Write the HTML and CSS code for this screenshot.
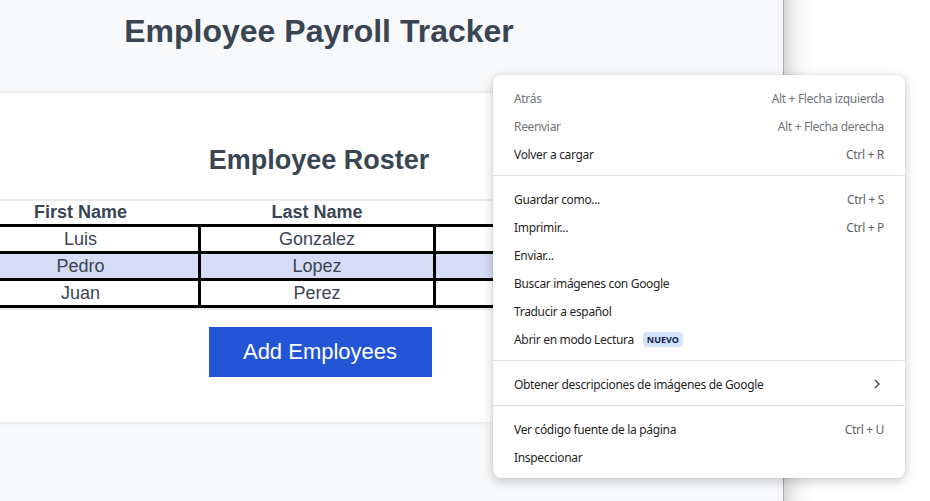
FILE: index.html
```html
<!DOCTYPE html>
<html lang="en">
<head>
<meta charset="utf-8">
<title>Employee Payroll Tracker</title>
<link rel="stylesheet" href="styles.css">
</head>
<body>
<div class="main">
  <div class="page">
    <h1 class="title">Employee Payroll Tracker</h1>
    <div class="card">
      <h2 class="card-title">Employee Roster</h2>
      <table class="roster">
        <colgroup>
          <col class="c1"><col class="c2"><col class="c3">
        </colgroup>
        <thead>
          <tr><th>First Name</th><th>Last Name</th><th></th></tr>
        </thead>
        <tbody>
          <tr><td>Luis</td><td>Gonzalez</td><td></td></tr>
          <tr class="alt"><td>Pedro</td><td>Lopez</td><td></td></tr>
          <tr><td>Juan</td><td>Perez</td><td></td></tr>
        </tbody>
      </table>
      <button class="add-btn">Add Employees</button>
    </div>
  </div>
</div>
<div class="side"></div>

<div class="ctx-menu">
  <div class="item disabled"><span>Atrás</span><span class="key">Alt + Flecha izquierda</span></div>
  <div class="item disabled"><span>Reenviar</span><span class="key">Alt + Flecha derecha</span></div>
  <div class="item"><span>Volver a cargar</span><span class="key">Ctrl + R</span></div>
  <div class="sep"></div>
  <div class="item"><span>Guardar como...</span><span class="key">Ctrl + S</span></div>
  <div class="item"><span>Imprimir...</span><span class="key">Ctrl + P</span></div>
  <div class="item"><span>Enviar...</span></div>
  <div class="item"><span>Buscar imágenes con Google</span></div>
  <div class="item"><span>Traducir a español</span></div>
  <div class="item"><span class="with-badge">Abrir en modo Lectura<span class="badge">NUEVO</span></span></div>
  <div class="sep"></div>
  <div class="item"><span>Obtener descripciones de imágenes de Google</span><svg class="chev" width="6" height="10" viewBox="0 0 6 10"><path d="M1 1 L5 5 L1 9" fill="none" stroke="#474747" stroke-width="1.4"/></svg></div>
  <div class="sep"></div>
  <div class="item"><span>Ver código fuente de la página</span><span class="key">Ctrl + U</span></div>
  <div class="item"><span>Inspeccionar</span></div>
</div>
</body>
</html>
```

FILE: styles.css
```css
html, body {
  margin: 0;
  padding: 0;
}
body {
  display: flex;
  width: 930px;
  height: 501px;
  overflow: hidden;
  font-family: "Liberation Sans", Arial, sans-serif;
  background: #fff;
}
.main {
  width: 783px;
  flex: none;
  height: 501px;
  background: #f8f9fb;
  border-right: 1px solid #a9a9a9;
  overflow: hidden;
}
.side {
  flex: 1;
  background: linear-gradient(to right, #d9d9d9 0, #efefef 10px, #fafafa 20px, #fff 28px);
}
.page {
  width: 638px;
}
.title {
  margin: 0;
  padding-top: 13px;
  text-align: center;
  font-size: 32px;
  line-height: 37px;
  font-weight: 700;
  color: #3a4553;
}
.card {
  margin: 43px -40px 0;
  background: #fff;
  box-shadow: 0 0 4px rgba(0, 0, 0, 0.14);
  padding: 52px 0 45px;
}
.card-title {
  margin: 0;
  text-align: center;
  font-size: 27px;
  line-height: 31px;
  font-weight: 700;
  color: #3a4553;
}
.roster {
  margin: 25px 0 0 0;
  width: 703px;
  table-layout: fixed;
  border-collapse: collapse;
  box-shadow: 0 0 0 2px #ebebeb;
  color: #3a4553;
  background: #fff;
}
.c1 { width: 238px; }
.c2 { width: 235px; }
.c3 { width: 230px; }
.roster th {
  height: 21px;
  font-size: 18px;
  line-height: 21px;
  font-weight: 700;
  padding: 1px;
  text-align: center;
}
.roster td {
  height: 22px;
  border: 3px solid #000;
  font-size: 18px;
  line-height: 22px;
  padding: 1px;
  text-align: center;
}
.roster tr.alt td {
  background: #d5dcf5;
}
.add-btn {
  display: block;
  margin: 19px auto 0;
  width: 223px;
  height: 50px;
  border: none;
  background: #2254d6;
  color: #fff;
  font-family: "Liberation Sans", Arial, sans-serif;
  font-size: 22px;
  padding: 0;
  position: relative;
  left: 1px;
}
.ctx-menu {
  position: absolute;
  left: 493px;
  top: 75px;
  width: 412px;
  box-sizing: border-box;
  padding: 9px 0 7px;
  background: #fff;
  border-radius: 8px;
  box-shadow: 0 3px 12px rgba(0, 0, 0, 0.22), 0 0 2px rgba(0, 0, 0, 0.12);
  font-family: "Noto Sans", sans-serif;
  font-size: 12px;
  letter-spacing: -0.33px;
  color: #1f1f1f;
}
.item {
  height: 28px;
  padding: 0 21px;
  display: flex;
  align-items: center;
  justify-content: space-between;
}
.item.disabled {
  color: #707479;
}
.key {
  color: #5f6368;
}
.item.disabled .key {
  color: #707479;
}
.sep {
  height: 1px;
  margin: 7px 0 9px;
  background: #dae1ee;
}
.with-badge {
  display: flex;
  align-items: center;
}
.badge {
  margin-left: 9px;
  padding: 0 4px;
  height: 15px;
  line-height: 15px;
  border-radius: 4px;
  background: #d3e3fd;
  color: #0b1f4a;
  font-size: 9px;
  font-weight: 700;
  letter-spacing: 0;
}
.chev {
  margin-right: 4px;
}
```
